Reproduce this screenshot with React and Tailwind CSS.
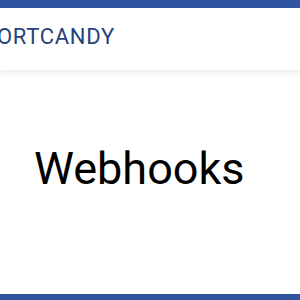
import React from "react";

export default function App() {
  return (
    <div className="w-[300px] h-[300px] bg-white flex flex-col overflow-hidden font-['Roboto',sans-serif]">
      <div className="h-[8px] bg-[#3154a0] shrink-0" />
      <header className="h-[62px] shrink-0 flex items-center pb-[6px] overflow-hidden shadow-[0_3px_6px_rgba(0,0,0,0.08)] relative z-10">
        <span className="-ml-[3px] text-[22px] tracking-[0.7px] text-[#26427a] whitespace-nowrap">ORTCANDY</span>
      </header>
      <main className="flex-1 flex items-center pl-[34px] pb-[28px]">
        <h1 className="text-[45px] text-black leading-none">Webhooks</h1>
      </main>
      <div className="h-[6px] bg-[#3154a0] shrink-0" />
    </div>
  );
}
